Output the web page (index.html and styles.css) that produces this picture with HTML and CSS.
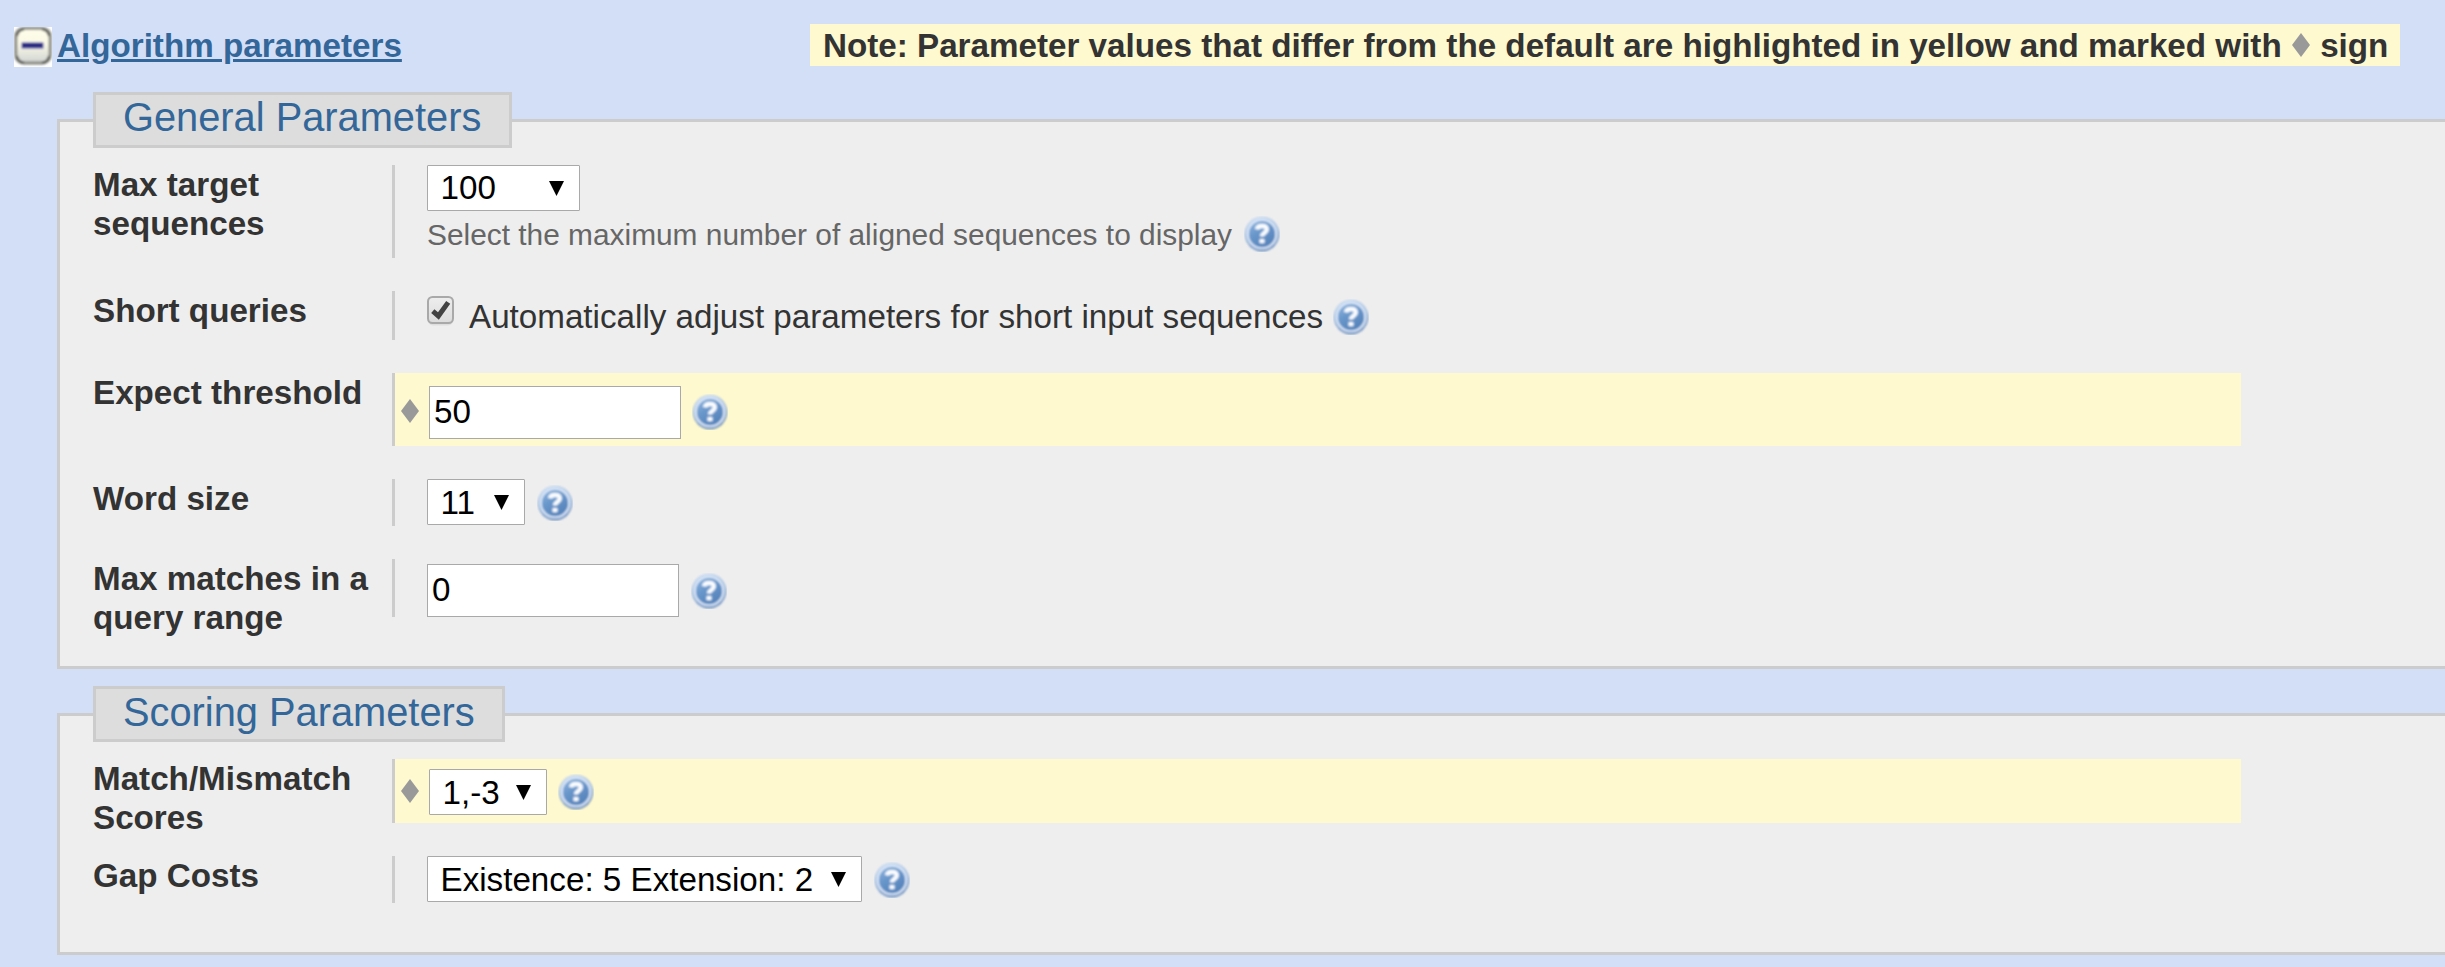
FILE: index.html
```html
<!DOCTYPE html>
<html lang="en">
<head>
<meta charset="utf-8">
<title>Algorithm parameters</title>
<link rel="stylesheet" href="styles.css">
</head>
<body>
<svg class="defs" aria-hidden="true">
  <defs>
    <linearGradient id="rim" x1="0" y1="0" x2="0.25" y2="1">
      <stop offset="0" stop-color="#cfe0f5"/><stop offset="0.5" stop-color="#93b5de"/><stop offset="1" stop-color="#4577b4"/>
    </linearGradient>
    <linearGradient id="disc" x1="0" y1="0" x2="0.6" y2="1">
      <stop offset="0" stop-color="#8db4de"/><stop offset="0.5" stop-color="#6896ca"/><stop offset="1" stop-color="#5583bb"/>
    </linearGradient>
    <filter id="soft" x="-10%" y="-10%" width="120%" height="120%"><feGaussianBlur stdDeviation="0.8"/></filter>
    <symbol id="help" viewBox="0 0 36 36">
      <g filter="url(#soft)">
        <circle cx="18" cy="18" r="17.2" fill="url(#rim)"/>
        <circle cx="18" cy="18" r="14.4" fill="none" stroke="#dbe7f7" stroke-width="2.4"/>
        <circle cx="18" cy="18" r="13" fill="url(#disc)"/>
        <path d="M13 13.4C13.4 10.6 15.4 10 18 10c3 0 4.8 1.2 4.8 3.4 0 3.4-4.8 3.4-4.8 7.2" fill="none" stroke="#fafcff" stroke-width="4.4"/>
        <rect x="15.4" y="23" width="5.2" height="4.2" rx="1" fill="#fafcff"/>
      </g>
    </symbol>
    <symbol id="diamond" viewBox="0 0 18 24"><path d="M9 0L18 12L9 24L0 12Z" fill="#999"/></symbol>
  </defs>
</svg>
<header class="top">
  <a class="toggle" href="#">
    <svg class="minus" viewBox="0 0 38 40">
      <defs><linearGradient id="btn" x1="0" y1="0" x2="0" y2="1"><stop offset="0" stop-color="#fffdea"/><stop offset="0.45" stop-color="#fbf9e6"/><stop offset="1" stop-color="#cfd3d3"/></linearGradient></defs>
      <rect width="38" height="40" fill="#fff"/>
      <g filter="url(#soft)">
        <rect x="1.8" y="1.4" width="34.4" height="34.6" rx="8" fill="url(#btn)" stroke="#94948e" stroke-width="3.4"/>
        <path d="M3 9Q4 3 10 2.4M28 2.4Q34 3 35 9M3 29Q4 35 10 35.6M28 35.6Q34 35 35 29" fill="none" stroke="#55554f" stroke-width="2"/>
        <rect x="7.2" y="15" width="22.6" height="7" rx="1.5" fill="#8f8fc4"/>
        <rect x="8" y="16.2" width="21" height="4.4" fill="#20207e"/>
      </g>
    </svg>
    <span class="toggle-text">Algorithm parameters</span>
  </a>
  <div class="note">Note: Parameter values that differ from the default are highlighted in yellow and marked with <svg class="mark"><use href="#diamond"/></svg> sign</div>
</header>

<section class="panel">
  <h2 class="legend">General Parameters</h2>
  <div class="rows">
    <div class="row">
      <label class="label">Max target sequences</label>
      <div class="value target">
        <span class="select s-target"><select><option>100</option></select></span>
        <div class="hint">Select the maximum number of aligned sequences to display<svg class="help"><use href="#help"/></svg></div>
      </div>
    </div>
    <div class="row">
      <label class="label">Short queries</label>
      <div class="value short">
        <svg class="check" viewBox="0 0 27 30">
          <defs><linearGradient id="cb" x1="0" y1="0" x2="0" y2="1"><stop offset="0" stop-color="#eeeeee"/><stop offset="1" stop-color="#dcdcdc"/></linearGradient></defs>
          <rect x="1" y="3" width="25" height="26.5" rx="5" fill="#dedede"/>
          <rect x="1" y="1" width="25" height="26" rx="4.5" fill="url(#cb)" stroke="#a9a9a9" stroke-width="2"/>
          <path d="M5.8 15.2L11.4 20L21.2 6.4" fill="none" stroke="#434343" stroke-width="5"/>
        </svg>
        <span class="check-text">Automatically adjust parameters for short input sequences</span>
        <svg class="help"><use href="#help"/></svg>
      </div>
    </div>
    <div class="row">
      <label class="label">Expect threshold</label>
      <div class="value expect changed">
        <svg class="mark"><use href="#diamond"/></svg>
        <input class="text" type="text" value="50">
        <svg class="help"><use href="#help"/></svg>
      </div>
    </div>
    <div class="row">
      <label class="label">Word size</label>
      <div class="value word">
        <span class="select s-word"><select><option>11</option></select></span>
        <svg class="help"><use href="#help"/></svg>
      </div>
    </div>
    <div class="row">
      <label class="label">Max matches in a query range</label>
      <div class="value matches">
        <input class="text" type="text" value="0">
        <svg class="help"><use href="#help"/></svg>
      </div>
    </div>
  </div>
</section>

<section class="panel scoring">
  <h2 class="legend">Scoring Parameters</h2>
  <div class="rows">
    <div class="row">
      <label class="label">Match/Mismatch Scores</label>
      <div class="value scores changed">
        <svg class="mark"><use href="#diamond"/></svg>
        <span class="select s-scores"><select><option>1,-3</option></select></span>
        <svg class="help"><use href="#help"/></svg>
      </div>
    </div>
    <div class="row">
      <label class="label">Gap Costs</label>
      <div class="value word">
        <span class="select s-gap"><select><option>Existence: 5 Extension: 2</option></select></span>
        <svg class="help"><use href="#help"/></svg>
      </div>
    </div>
  </div>
</section>
</body>
</html>
```
FILE: styles.css
```css
* { box-sizing: border-box; }
html { overflow: hidden; }
body {
  margin: 0;
  height: 967px;
  overflow: hidden;
  background: #d3dff6;
  color: #333;
  font: 33.2px/39px "Liberation Sans", Arial, sans-serif;
}
.defs { position: absolute; width: 0; height: 0; }

.top { display: flex; align-items: flex-start; height: 92px; padding: 24px 0 0 14px; }
.toggle { display: flex; width: 796px; color: #336699; font-weight: bold; text-decoration: none; }
.minus { width: 38px; height: 40px; margin: 3px 5px 0 0; }
.toggle-text { padding-top: 2px; text-decoration: underline; text-decoration-thickness: 3px; text-underline-offset: 2px; }
.note {
  width: 1590px;
  height: 42px;
  padding: 2px 0 0 13px;
  background: #fff9cf;
  font-weight: bold;
  white-space: nowrap;
}
.mark { flex: none; width: 18px; height: 24px; }
.note .mark { margin: 0 1px; vertical-align: baseline; }

.panel {
  margin: 27px 0 0 57px;
  height: 550px;
  border: 3px solid #ccc;
  border-right: 0;
  background: #eee;
}
.scoring { height: 242px; margin-top: 44px; }
.legend {
  width: 419px;
  height: 56px;
  margin: -30px 0 0 33px;
  padding: 0 0 0 27px;
  border: 3px solid #ccc;
  background: #ddd;
  color: #336699;
  font-size: 39.8px;
  font-weight: normal;
  line-height: 44px;
  white-space: nowrap;
}
.scoring .legend { width: 412px; line-height: 46px; }
.rows { display: grid; gap: 33px; padding: 17px 0 0 33px; }
.row { display: grid; grid-template-columns: 299px 1849px; }
.label { width: 290px; height: 39px; font-weight: bold; }

.value { display: flex; align-items: flex-start; padding-left: 32px; border-left: 3px solid #ccc; }
.changed { background: #fff9cf; padding-left: 6px; }
.help { flex: none; width: 36px; height: 36px; margin-left: 12px; }

.target { flex-direction: column; height: 93px; }
.target select { padding-bottom: 1px; }
.hint { display: flex; margin-top: 4px; color: #666; font-size: 29.87px; line-height: 39px; white-space: nowrap; }
.hint .help { margin-top: 1px; }

.short { height: 49px; }
.check { width: 27px; height: 30px; margin: 5px 15px 0 0; }
.check-text { margin-top: 6px; white-space: nowrap; }
.short .help { margin: 8px 0 0 10px; }

.expect { height: 73px; }
.changed .mark { margin-right: 10px; }
.expect .mark { margin-top: 26px; }
.expect .text { margin-top: 13px; }
.expect .help { margin: 21px 0 0 11px; }
.word { height: 47px; }
.word .help { margin-top: 6px; }
.matches { height: 58px; }
.matches .text { margin-top: 5px; }
.matches .help { margin-top: 14px; }
.scores { height: 64px; }
.scores .mark { margin-top: 20px; }
.scores .select { margin-top: 10px; }
.scores .help { margin: 15px 0 0 11px; }

.text {
  width: 252px;
  height: 53px;
  padding: 0 4px 2px;
  border: 1px solid #a9a9a9;
  background: #fff;
  color: #000;
  font: inherit;
}
.select { position: relative; height: 46px; }
.select select {
  appearance: none;
  display: block;
  width: 100%;
  height: 46px;
  margin: 0;
  padding: 0 0 0 12.5px;
  border: 1px solid #a9a9a9;
  border-radius: 1px;
  background: #fff;
  color: #000;
  font: inherit;
}
.select.s-target select { padding-bottom: 2px; }
.select::after {
  content: "";
  position: absolute;
  right: 16px;
  top: 16px;
  width: 15px;
  height: 15px;
  background: #000;
  clip-path: polygon(0 0, 100% 0, 50% 100%);
}
.s-target { width: 153px; }
.s-word { width: 98px; }
.s-scores { width: 118px; }
.s-gap { width: 435px; }
```
